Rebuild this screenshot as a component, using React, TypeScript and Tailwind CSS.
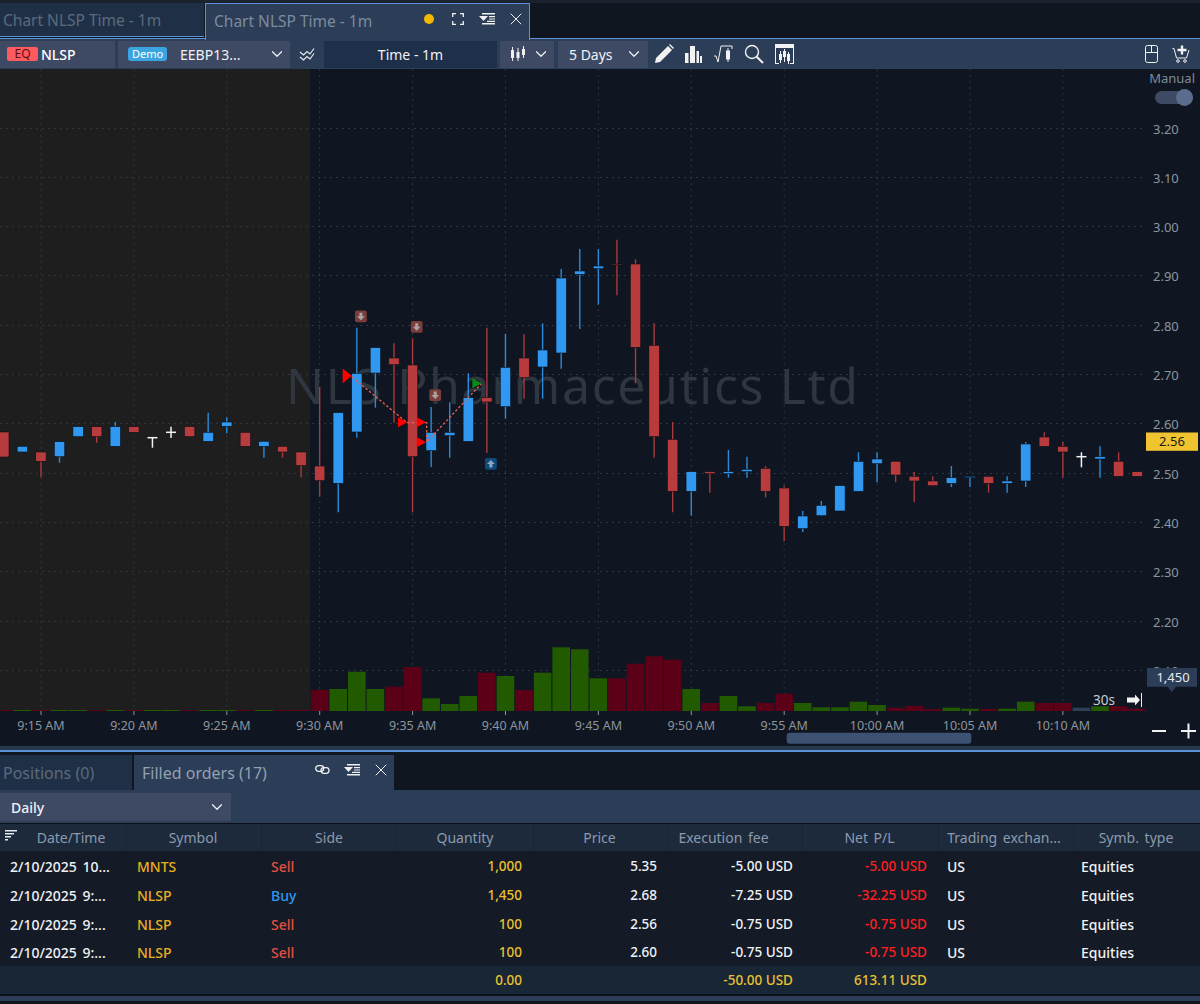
import { ChevronDown, X } from "lucide-react";

const FONT = "font-['Noto_Sans','Liberation_Sans',sans-serif]";

type Candle = ["r" | "b" | "w", number, number, number, number];

// color, body top, body bottom, wick top, wick bottom (page px)
const CANDLES: Candle[] = [
  ["r", 432, 457, 432, 457], ["b", 446.3, 452, 446.3, 452], ["r", 452, 461.3, 452, 477.3], ["b", 441.7, 456.7, 441.7, 462.7],
  ["b", 426.7, 436.7, 426.7, 436.7], ["r", 426.7, 436.7, 426.7, 442.7], ["b", 426.7, 446.3, 422, 446.3], ["r", 426.7, 432.3, 426.7, 432.3],
  ["w", 437.7, 437.7, 437.7, 447.7], ["w", 432.3, 432.3, 426.7, 438], ["r", 426.7, 436.7, 426.7, 436.7], ["b", 432.3, 441.3, 412.7, 441.3],
  ["b", 422, 426.3, 417.3, 433.3], ["r", 432.3, 446.3, 432.3, 446.3], ["b", 441.3, 446.3, 441.3, 457.7], ["r", 446.3, 452, 446.3, 457.7],
  ["r", 452, 465.7, 452, 477.3],
  ["r", 466, 480.7, 387, 496.7], ["b", 412.7, 483.3, 412.7, 512.3], ["b", 373.3, 432, 327.7, 437.7], ["b", 347.7, 373, 347.7, 407.7],
  ["r", 358, 364.7, 343.3, 422.7], ["r", 365, 456.7, 338.3, 512.3], ["b", 432.3, 450.7, 407, 467], ["b", 432.3, 435.7, 402.3, 457.7],
  ["b", 397.7, 441.3, 373.3, 441.3], ["r", 397.7, 402, 327.7, 453], ["b", 367.3, 406.7, 334, 418.7], ["r", 358, 377.7, 334, 398.7],
  ["b", 350, 367, 323.3, 398.7], ["b", 278, 353, 269, 368.7], ["b", 271, 274.3, 249, 329], ["b", 266, 268.7, 249, 304.7],
  ["r", 264, 265, 239.7, 295.3], ["r", 264, 347.3, 259.3, 383.3], ["r", 345.3, 436.7, 323.3, 457.7],
  ["r", 439.3, 491.3, 422, 512.3], ["b", 471.7, 491.3, 471.7, 515.7], ["r", 471.7, 473.7, 471.7, 492.7], ["b", 471.7, 473.7, 450, 477.7],
  ["b", 469.3, 471.7, 456.7, 477.7], ["r", 468.3, 491.3, 466, 497.3], ["r", 488, 526.3, 485.7, 541.3], ["b", 516, 528.7, 511, 532],
  ["b", 505.3, 515.7, 501, 515.7], ["b", 485.7, 511, 485.7, 511], ["b", 461.3, 491.3, 452.3, 491.3], ["b", 459, 463.7, 452.3, 482.3],
  ["r", 461.3, 475, 461.3, 482.3], ["r", 476.3, 481, 472, 502], ["r", 481, 485.7, 476.3, 485.7], ["b", 477.7, 483.3, 466, 487],
  ["b", 476.3, 477.7, 476.3, 487], ["r", 476.3, 483.3, 476.3, 492.7], ["b", 481, 483.3, 476.3, 492.7], ["b", 444, 481, 442, 487],
  ["r", 437, 446.3, 432.3, 446.3], ["r", 446.3, 452, 442, 477.7], ["w", 456.7, 456.7, 452.3, 467.3], ["b", 456.7, 459, 446.3, 477.7],
  ["r", 461.3, 476.3, 452.3, 476.3], ["r", 471.7, 476.3, 471.7, 476.3],
];

type Vol = ["r" | "g" | "s", number];

const VOLUMES: Vol[] = [
  ["r", 710], ["g", 710], ["r", 710], ["g", 710], ["g", 710], ["r", 710], ["g", 710], ["r", 710], ["g", 710], ["g", 710],
  ["r", 710], ["g", 710], ["g", 710], ["r", 710], ["g", 710], ["r", 710], ["r", 710],
  ["r", 690], ["g", 689], ["g", 671.7], ["g", 689], ["r", 686.7], ["r", 667], ["g", 698.3], ["g", 704], ["g", 696], ["r", 672.7],
  ["g", 676], ["r", 690], ["g", 672.7], ["g", 647.3], ["g", 649.3], ["g", 678.3], ["r", 678.3], ["r", 663.7], ["r", 656.3], ["r", 659.7],
  ["g", 689], ["r", 703], ["g", 696], ["g", 706.3], ["r", 703], ["r", 693.7], ["g", 703], ["g", 707.3], ["g", 707.3], ["g", 701.7],
  ["g", 705], ["r", 707.7], ["r", 706], ["r", 709], ["g", 707.7], ["g", 708.7], ["r", 709], ["g", 708.7], ["g", 701.7], ["r", 703],
  ["r", 703], ["s", 707.7], ["g", 706.3], ["r", 706.3], ["r", 708.7],
];

const PRICES: [string, number][] = [
  ["3.20", 128], ["3.10", 177], ["3.00", 226], ["2.90", 275], ["2.80", 325], ["2.70", 374],
  ["2.60", 423], ["2.50", 473], ["2.40", 522], ["2.30", 571], ["2.20", 621], ["2.10", 670],
];

const TIMES = ["9:15 AM", "9:20 AM", "9:25 AM", "9:30 AM", "9:35 AM", "9:40 AM", "9:45 AM", "9:50 AM", "9:55 AM", "10:00 AM", "10:05 AM", "10:10 AM"];

const cx = (i: number) => 3.8 + i * 18.58;
const tx = (i: number) => 41 + i * 92.9;

function CandleShape({ c, i }: { c: Candle; i: number }) {
  const [color, top, bot, wt, wb] = c;
  const x = cx(i);
  if (color === "w") {
    return (
      <g stroke="#f2f2f2" strokeWidth="1.5">
        <line x1={x - 5} x2={x + 5} y1={top} y2={top} />
        <line x1={x} x2={x} y1={wt} y2={wb} />
      </g>
    );
  }
  const fill = color === "r" ? "#b83c3e" : "#3098f0";
  const wick = color === "r" ? "#a83a3c" : "#2b8ad8";
  return (
    <g>
      <line x1={x} x2={x} y1={wt} y2={wb} stroke={wick} strokeWidth="1.4" />
      <rect x={x - 5.2} y={top} width={10.4} height={Math.max(bot - top, 1)} fill={fill} stroke="#0b1018" strokeWidth="0.6" />
    </g>
  );
}

function Badge({ x, y, up }: { x: number; y: number; up?: boolean }) {
  return (
    <g transform={`translate(${x} ${y})`}>
      <rect width="11.8" height="11.8" rx="2" fill={up ? "#0e4a7c" : "#7a3d3c"} />
      <path
        d={up ? "M5.9 2 9.8 6H7.4v3.6H4.4V6H2z" : "M5.9 9.8 9.8 5.8H7.4V2.2H4.4v3.6H2z"}
        fill={up ? "#8fa6bb" : "#a9a3a3"}
      />
    </g>
  );
}

function Chart() {
  return (
    <div className="relative h-[677px] bg-[#0f1621]">
      <svg className="block" width="1200" height="677" viewBox="0 69 1200 677">
        <rect x="0" y="69" width="310" height="642" fill="#1e1e1e" />
        <g stroke="#2e3540" strokeWidth="1" strokeDasharray="2 4">
          {TIMES.map((t, i) => (
            <line key={t} x1={tx(i)} x2={tx(i)} y1="69" y2="711" />
          ))}
          {PRICES.map(([p, y]) => (
            <line key={p} x1="0" x2="1146" y1={y + 0.5} y2={y + 0.5} />
          ))}
        </g>
        <text x="572" y="404" textAnchor="middle" fontSize="50" fill="#30363f" fontFamily="Noto Sans" textLength="572">
          NLS Pharmaceutics Ltd
        </text>
        {VOLUMES.map(([c, top], i) => (
          <rect
            key={i}
            x={cx(i) - 8.8}
            y={top}
            width="17.6"
            height={711 - top}
            fill={c === "r" ? "#5c0018" : c === "g" ? "#225a00" : "#2d3f57"}
          />
        ))}
        {CANDLES.map((c, i) => (
          <CandleShape key={i} c={c} i={i} />
        ))}
        <path d="M351.7 376.7 407 422.7H426.7V442L481 384" stroke="#e8604f" strokeWidth="1.3" strokeDasharray="2.5 2" fill="none" />
        <g fill="#ff0000">
          <path d="M342.7 368.5 351.7 375.8 342.7 383.3z" />
          <path d="M398 417.3 407.3 422.3 398 427.3z" />
          <path d="M416.7 417.3 426 422.3 416.7 427.3z" />
          <path d="M416.7 437 426 442.2 416.7 447.3z" />
        </g>
        <path d="M472.3 378.3 481.7 383.3 472.3 388.3z" fill="#0a8a12" />
        <Badge x={355} y={310.5} />
        <Badge x={410.8} y={321} />
        <Badge x={429.3} y={389.3} />
        <Badge x={485} y={458} up />
        <g fontFamily="Noto Sans" fill="#8d949e">
          {PRICES.map(([p, y]) => (
            <text key={p} x="1153" y={y + 6} fontSize="13">
              {p}
            </text>
          ))}
          {TIMES.map((t, i) => (
            <text key={t} x={tx(i)} y="730" textAnchor="middle" fontSize="12.5">
              {t}
            </text>
          ))}
        </g>
        <g stroke="#8d949e" strokeWidth="1">
          {TIMES.map((t, i) => (
            <line key={t} x1={tx(i)} x2={tx(i)} y1="711" y2="715" />
          ))}
        </g>
        <rect x="1146" y="432.5" width="52" height="18.3" fill="#f0c330" />
        <text x="1172" y="446" textAnchor="middle" fontFamily="Noto Sans" fontSize="13" fill="#1a1a1a">
          2.56
        </text>
        <path d="M1147 668H1197V686.7H1176L1171.7 692 1167.4 686.7H1147z" fill="#2b3d57" />
        <text x="1173" y="682" textAnchor="middle" fontFamily="Noto Sans" fontSize="13" fill="#e6eaf0">
          1,450
        </text>
        <text x="1093" y="705" fontFamily="Noto Sans" fontSize="13.5" fill="#c8ccd2">
          30s
        </text>
        <path d="M1127 697.5H1135V694.5L1140 700 1135 705.5V702.5H1127z" fill="#f2f2f2" />
        <line x1="1141.5" x2="1141.5" y1="693" y2="707" stroke="#f2f2f2" strokeWidth="1" />
        <rect x="786.7" y="732.7" width="184.6" height="11" rx="3" fill="#3d5272" />
        <path d="M1152 731H1166M1181 731H1196M1188.5 723.5V738.5" stroke="#f2f2f2" strokeWidth="2" />
      </svg>
      <div className="absolute right-[5px] top-0 flex flex-col items-end">
        <span className="text-[13px] leading-[18px] text-[#7f8a99]">Manual</span>
        <div className="relative mr-[2px] mt-[4px] h-[13px] w-[38px] rounded-full bg-[#3e4a63]">
          <div className="absolute -top-[2px] right-0 h-[17px] w-[17px] rounded-full bg-[#5a6d8e]" />
        </div>
      </div>
    </div>
  );
}

function PanelIcon() {
  return (
    <svg width="17" height="12" viewBox="0 0 17 12" fill="#f0f0f0">
      <path d="M0 3h9L4.5 8z" />
      <path d="M3 0h13v1.4H3zM10 3h6v1.2h-6zM10 5.4h6v1.2h-6zM8 7.8h8V9H8zM3 10h13v1.4H3z" />
    </svg>
  );
}

function Toolbar() {
  return (
    <div className="flex h-[31px] items-center border-t-[1.5px] border-[#5b93d8] bg-[#2b3d57]">
      <div className="flex h-[27px] w-[115px] items-center gap-[3px] bg-[#3e4a63] pl-[7px]">
        <span className="flex h-[14px] w-[31px] items-center justify-center rounded-[2px] bg-[#ff5a5f] text-[12px] text-[#5e1014]">EQ</span>
        <span className="text-[14px] font-medium text-white">NLSP</span>
      </div>
      <div className="ml-[3px] flex h-[27px] w-[172px] items-center bg-[#3e4a63] pl-[10px] pr-[4px]">
        <span className="flex h-[14px] w-[39px] items-center justify-center rounded-[3px] bg-[#3aa5e0] text-[11px] text-white">Demo</span>
        <span className="ml-[13px] flex-1 pt-[1px] text-[14px] text-[#f0f2f5]">EEBP13...</span>
        <ChevronDown size={18} strokeWidth={1.6} className="text-[#f0f2f5]" />
      </div>
      <div className="flex w-[34px] justify-center">
        <svg width="16" height="15" viewBox="0 0 16 15" fill="none" stroke="#e6e9ee" strokeWidth="1.2">
          <path d="M1 5l3.5 3L8 4.5 11 7l4-5.5" />
          <path d="M1 10l3.5 3L8 9.5 11 12l4-5.5" />
        </svg>
      </div>
      <div className="flex h-[27px] w-[173px] items-center justify-center bg-[#1e2f4a] pt-[1px] text-[14px] text-[#f0f2f5]">Time - 1m</div>
      <div className="ml-[3px] flex h-[27px] w-[54px] items-center gap-[6px] bg-[#3e4a63] pl-[10px]">
        <svg width="16" height="16" viewBox="0 0 16 16" fill="#f0f0f0">
          <path d="M1 4h3v8H1zM2 1h1v14H2zM6.5 6h3v6h-3zM7.5 2h1v13h-1zM12 3h3v6h-3zM13 0h1v12h-1z" />
        </svg>
        <ChevronDown size={18} strokeWidth={1.6} className="text-[#f0f2f5]" />
      </div>
      <div className="ml-[4px] flex h-[27px] w-[90px] items-center justify-between bg-[#3e4a63] pl-[11px] pr-[5px] text-[14px] text-[#f0f2f5]">
        <span className="pt-[1px]">5 Days</span>
        <ChevronDown size={18} strokeWidth={1.6} />
      </div>
      <div className="ml-[6px] flex items-center gap-[10px]">
        <svg width="20" height="20" viewBox="0 0 20 20" fill="#f2f2f2">
          <path d="M1 19l1-5L14 2l4 4L6 18zM15 1l1-1 4 4-1 1z" />
        </svg>
        <svg width="18" height="18" viewBox="0 0 18 18" fill="#f2f2f2">
          <path d="M1 8h3.5v10H1zM6 1h5v17H6zM12.5 6h2.5v12h-2.5zM16 11h2v7h-2z" />
        </svg>
        <svg className="ml-[2px]" width="19" height="18" viewBox="0 0 19 18" fill="none" stroke="#f2f2f2" strokeWidth="1">
          <path d="M0 11h2l2 6 3-16h11v3" />
          <path d="M14 3v14" />
          <rect x="12.5" y="6" width="3" height="8" fill="#f2f2f2" />
        </svg>
        <svg className="ml-[1px]" width="20" height="20" viewBox="0 0 20 20" fill="none" stroke="#f2f2f2" strokeWidth="1.4">
          <circle cx="8" cy="8" r="6.5" />
          <path d="M12.7 12.7 19 19" strokeWidth="2" />
        </svg>
        <svg className="ml-[1px]" width="19" height="20" viewBox="0 0 19 20" fill="#f2f2f2">
          <path d="M0 0h19v4H0zM0 4h1v15h3v1H0zM18 4h1v16h-4v-1h3z" />
          <path d="M5 7h1v12H5zM4 10h3v6H4zM9 5h1v13H9zM8 7h3v6H8zM13 8h1v12h-1zM12 10h3v7h-3z" />
        </svg>
      </div>
      <div className="ml-auto flex items-center gap-[14px] pr-[10px]">
        <svg width="13" height="18" viewBox="0 0 13 18" fill="none" stroke="#f2f2f2" strokeWidth="1">
          <rect x="0.5" y="0.5" width="12" height="17" rx="2" />
          <path d="M0.5 7.5h12M6.5 0.5v7" />
        </svg>
        <svg width="18" height="18" viewBox="0 0 18 18" fill="none" stroke="#f2f2f2" strokeWidth="1">
          <path d="M0.5 3.5 2 3.5l2.5 9.5h10L17 5" />
          <circle cx="6" cy="16" r="1.3" />
          <circle cx="13" cy="16" r="1.3" />
          <path d="M10 0.5v9M5.5 5h9" strokeWidth="2.4" />
        </svg>
      </div>
    </div>
  );
}

const COLS = "grid-cols-[127px_135px_135px_137px_135px_134px_136px_135px_126px]";

const HEADERS: [string, string][] = [
  ["Date/Time", "pl-[16px]"],
  ["Symbol", "pr-[2px]"],
  ["Side", ""],
  ["Quantity", ""],
  ["Price", "pr-[3px]"],
  ["Execution fee", "pr-[24px]"],
  ["Net P/L", "pr-[2px]"],
  ["Trading exchan...", "pl-[2px] pr-[6px]"],
  ["Symb. type", "pr-[2px]"],
];

const ROWS = [
  ["2/10/2025 10...", "MNTS", "Sell", "1,000", "5.35", "-5.00 USD", "-5.00 USD"],
  ["2/10/2025 9:...", "NLSP", "Buy", "1,450", "2.68", "-7.25 USD", "-32.25 USD"],
  ["2/10/2025 9:...", "NLSP", "Sell", "100", "2.56", "-0.75 USD", "-0.75 USD"],
  ["2/10/2025 9:...", "NLSP", "Sell", "100", "2.60", "-0.75 USD", "-0.75 USD"],
];

function Orders() {
  return (
    <div className="text-[14px]">
      <div className="flex h-[35px] bg-[#10161f]">
        <div className="flex w-[132px] items-center bg-[#1f3046] pl-[3px] text-[16px] text-[#5b6a7d]">Positions (0)</div>
        <div className="ml-[2px] flex w-[260px] items-center bg-[#2b3d57] pl-[8px] text-[16px] text-[#93a0b2]">
          <span>Filled orders (17)</span>
          <div className="-mt-[6px] ml-[48px] flex items-center text-[#f0f0f0]">
            <svg width="15" height="9" viewBox="0 0 15 9" fill="none" stroke="#f0f0f0" strokeWidth="1.3">
              <rect x="0.7" y="0.7" width="8" height="5.6" rx="2.8" />
              <rect x="6" y="2.7" width="8" height="5.6" rx="2.8" />
            </svg>
            <div className="ml-[14px]">
              <PanelIcon />
            </div>
            <X size={20} strokeWidth={1.2} className="ml-[10px]" />
          </div>
        </div>
      </div>
      <div className="h-[33px] bg-[#2b3d57] pt-[3px]">
        <div className="flex h-[28px] w-[231px] items-center justify-between bg-[#3e4a63] pl-[11px] pr-[5px] font-medium text-[#f0f2f5]">
          <span>Daily</span>
          <ChevronDown size={18} strokeWidth={1.6} />
        </div>
      </div>
      <div className={`relative grid h-[28px] border-t border-[#0b1018] bg-[#1c2a3c] text-[#8d9aad] [word-spacing:2px] ${COLS}`}>
        <svg className="absolute left-[5px] top-[6px]" width="13" height="12" viewBox="0 0 13 12" fill="#e6e9ee">
          <path d="M0 0h12v1.5H0zM0 3h9v1.5H0zM0 6h6v1.5H0zM0 9h3v1.5H0z" />
        </svg>
        {HEADERS.map(([h, pad]) => (
          <div key={h} className={`flex items-center justify-center border-r border-[#18242f] last:border-r-0 ${pad}`}>
            {h}
          </div>
        ))}
      </div>
      {ROWS.map((r, i) => (
        <div key={i} className={`grid items-center bg-[#141b27] pt-[1px] font-medium text-[#f0f2f5] ${i === 3 ? "h-[28px]" : "h-[29px]"} ${COLS}`}>
          <span className="pl-[10px] [word-spacing:2px]">{r[0]}</span>
          <span className="pl-[10px] text-[#e8b020]">{r[1]}</span>
          <span className={`pl-[9px] ${r[2] === "Buy" ? "text-[#3098f0]" : "text-[#e0503f]"}`}>{r[2]}</span>
          <span className="pr-[12px] text-right text-[13.5px] text-[#e8c030]">{r[3]}</span>
          <span className="pr-[12px] text-right text-[13.5px]">{r[4]}</span>
          <span className="pr-[10px] text-right text-[13.5px]">{r[5]}</span>
          <span className="pr-[12px] text-right text-[13.5px] text-[#ff1f1f]">{r[6]}</span>
          <span className="pl-[8px]">US</span>
          <span className="pl-[7px]">Equities</span>
        </div>
      ))}
      <div className={`grid h-[30px] items-center border-b-2 border-[#0b1018] bg-[#182636] text-[13.5px] font-medium text-[#e8c030] ${COLS}`}>
        <span />
        <span />
        <span />
        <span className="pr-[12px] text-right">0.00</span>
        <span />
        <span className="pr-[10px] text-right">-50.00 USD</span>
        <span className="pr-[12px] text-right">613.11 USD</span>
        <span />
        <span />
      </div>
      <div className="h-[5px] bg-[#2b3d57]" />
    </div>
  );
}

export default function App() {
  return (
    <div className={`h-[1004px] w-[1200px] overflow-hidden bg-[#10161f] ${FONT}`}>
      <div className="h-[3px] bg-[#1c212e]" />
      <div className="flex h-[35px]">
        <div className="flex h-[34px] w-[204px] items-center border-b border-[#5b93d8] bg-[#1f3046] pl-[3px] pt-[2px] text-[15.5px] text-[#5b6a7d]">Chart NLSP Time - 1m</div>
        <div className="z-10 ml-[1px] flex h-[37px] w-[325px] items-center border-x border-t border-[#5b93d8] bg-[#2b3d57] pb-[1px] pl-[8px] text-[15.5px] text-[#7d8b9e]">
          <span className="w-[158px] whitespace-nowrap">Chart NLSP Time - 1m</span>
          <div className="-mt-[6px] ml-[52px] flex items-center">
            <span className="h-[10px] w-[10px] rounded-full bg-[#f5b800]" />
            <svg className="ml-[18px]" width="12" height="12" viewBox="0 0 12 12" fill="none" stroke="#f0f0f0" strokeWidth="1.3">
              <path d="M4 .7H.7V4M8 .7h3.3V4M4 11.3H.7V8M8 11.3h3.3V8" />
            </svg>
            <div className="ml-[15px]">
              <PanelIcon />
            </div>
            <X size={20} strokeWidth={1.2} className="ml-[10px] text-[#f0f0f0]" />
          </div>
        </div>
      </div>
      <Toolbar />
      <Chart />
      <div className="h-[4px] bg-[#26374e]" />
      <div className="h-[2px] bg-[#5b93d8]" />
      <div className="h-[3px] bg-[#10161f]" />
      <Orders />
    </div>
  );
}
